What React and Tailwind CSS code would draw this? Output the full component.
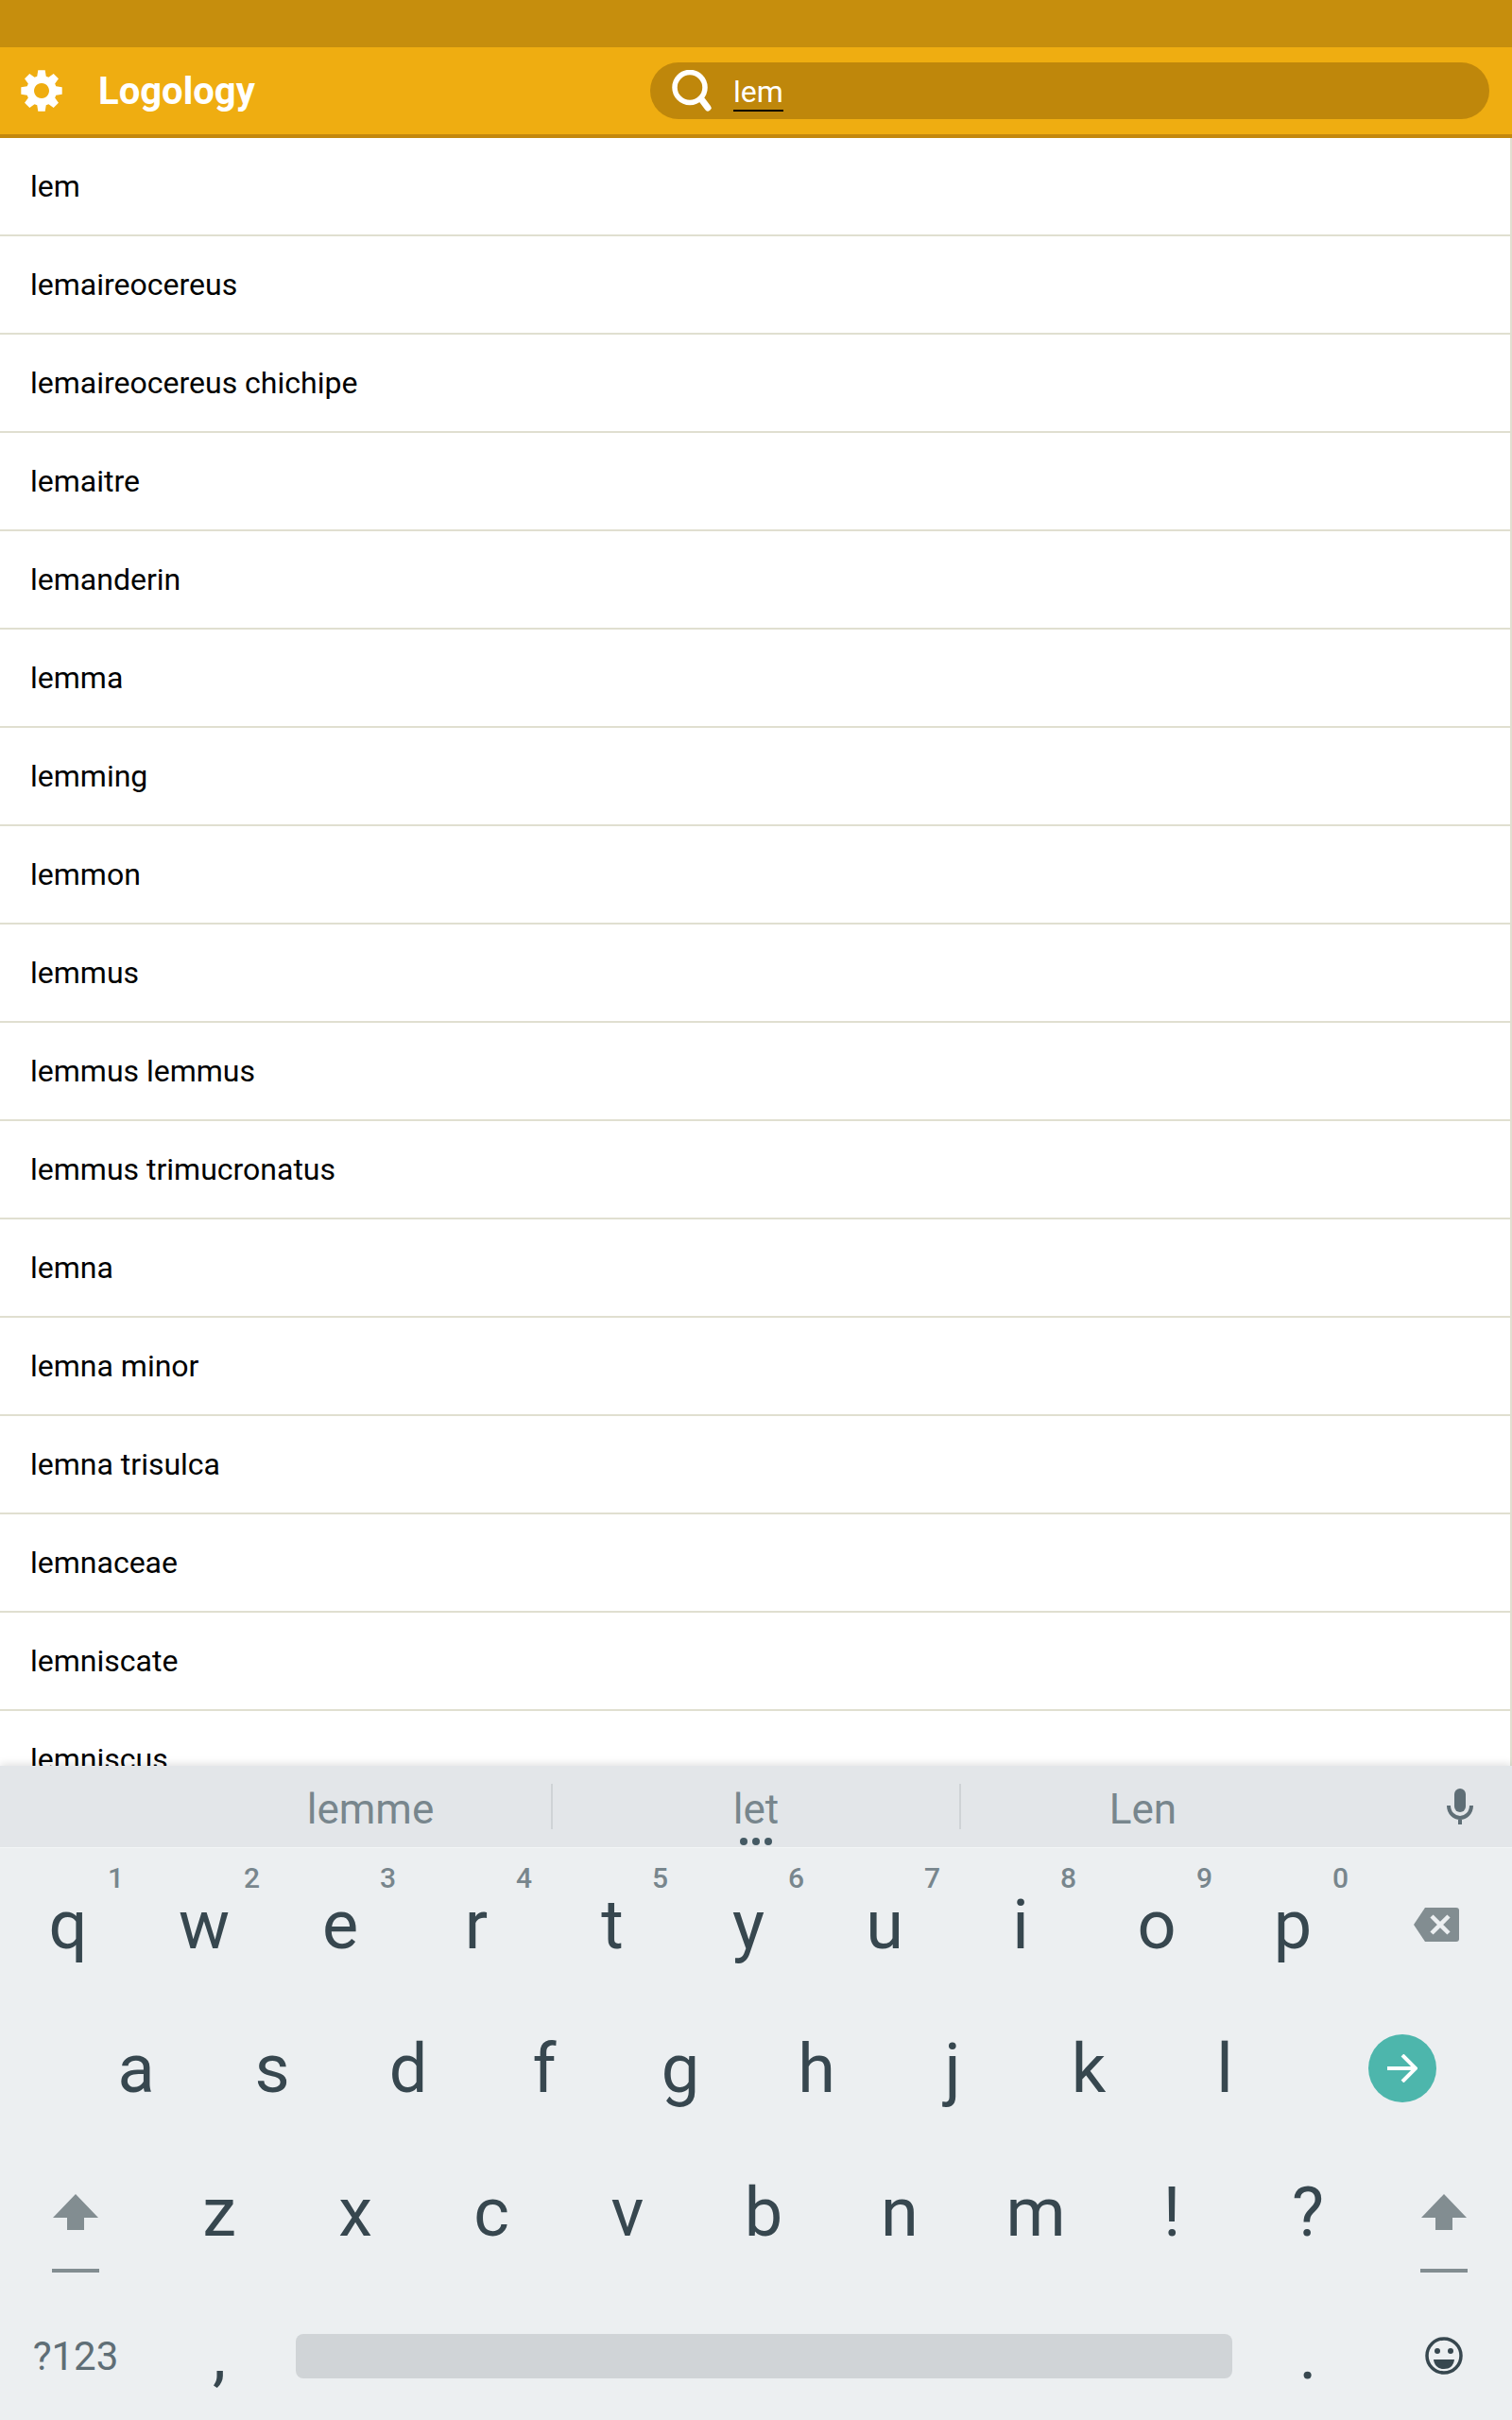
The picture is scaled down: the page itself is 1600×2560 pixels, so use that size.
const words = [
    'lem', 'lemaireocereus', 'lemaireocereus chichipe', 'lemaitre', 'lemanderin', 'lemma', 'lemming', 'lemmon',
    'lemmus', 'lemmus lemmus', 'lemmus trimucronatus', 'lemna', 'lemna minor', 'lemna trisulca', 'lemnaceae',
    'lemniscate', 'lemniscus',
];

// 8 tooth cog, outline plus centre hole
const gearPath = () => {
    const pts = [];
    for (let i = 0; i < 8; i++) {
        const a = (i * Math.PI) / 4 - Math.PI / 2;
        [[16, -0.3], [22, -0.17], [22, 0.17], [16, 0.3]].forEach(([r, d]) => {
            pts.push(`${(22 + r * Math.cos(a + d)).toFixed(2)} ${(22 + r * Math.sin(a + d)).toFixed(2)}`);
        });
    }
    return `M${pts.join(' L')} Z M22 14 a8 8 0 1 0 0.01 0 Z`;
};

const Key = ({ label, num, className = 'w-[144px] pt-3' }) => (
    <div className={`relative flex items-center justify-center text-[72px] font-normal leading-none text-[#37474f] ${className}`}>
        {label}
        {num && <span className="absolute left-[114px] top-[14px] text-[30px] font-medium leading-[36px] text-[#78868d]">{num}</span>}
    </div>
);

const Shift = () => (
    <div className="flex flex-col items-center">
        <svg width="48" height="38" viewBox="0 0 48 38"><path d="M24 0 L48 25 H33 V38 H15 V25 H0 Z" fill="#828d91" /></svg>
        <div className="mt-[41px] h-[4px] w-[50px] bg-[#828d91]" />
    </div>
);

const App = () => {
    return (
        <div className="flex h-screen flex-col overflow-hidden bg-white font-['Roboto',sans-serif]">
            <div className="h-[50px] bg-[#c68e0d]" />

            <div className="flex h-[96px] items-start border-b-4 border-[#c3880d] bg-[#efad11]">
                <div className="flex h-[92px] w-[688px] items-center pl-[22px]">
                    <svg width="44" height="44" viewBox="0 0 44 44"><path d={gearPath()} fill="white" fillRule="evenodd" /></svg>
                    <span className="ml-[38px] mt-px text-[40px] font-bold text-white">Logology</span>
                </div>
                <div className="mt-4 flex h-[60px] w-[888px] items-center rounded-full bg-[#bf870b] pl-[22px]">
                    <svg width="44" height="44" viewBox="0 0 44 44" fill="none" stroke="white">
                        <circle cx="20" cy="18.5" r="16" strokeWidth="5.5" />
                        <path d="M33 32 L39 40" strokeWidth="7" strokeLinecap="round" />
                    </svg>
                    <span className="ml-[22px] mt-1 border-b-2 border-black text-[32px] leading-[38px] text-white">lem</span>
                </div>
            </div>

            <div className="min-h-0 flex-1 overflow-hidden border-r-2 border-[#e0dfd0]">
                {words.map((word) => (
                    <div key={word} className="flex h-[104px] items-center border-b-2 border-[#e0dfd0] pl-8 text-[32px] text-black">
                        {word}
                    </div>
                ))}
            </div>

            <div className="relative h-[692px] bg-[#eceff1] shadow-[0_-2px_8px_rgba(0,0,0,0.12)]">
                <div className="flex h-[86px] items-center bg-[#e3e6e9] pl-[201px] text-[44px] text-[#78868d]">
                    <div className="flex h-[48px] w-[382px] items-center justify-center pt-[6px]">lemme</div>
                    <div className="relative flex h-[48px] w-[434px] items-center justify-center border-x-2 border-[#cfd3d6] pt-[6px]">
                        let
                        <div className="absolute -bottom-[17px] left-1/2 flex -translate-x-1/2 gap-[5px]">
                            <span className="h-2 w-2 rounded-full bg-[#455a64]" />
                            <span className="h-2 w-2 rounded-full bg-[#455a64]" />
                            <span className="h-2 w-2 rounded-full bg-[#455a64]" />
                        </div>
                    </div>
                    <div className="flex h-[48px] w-[385px] items-center justify-center pt-[6px]">Len</div>
                    <div className="ml-auto flex w-[110px] justify-center">
                        <svg width="30" height="40" viewBox="0 0 30 40" fill="none">
                            <rect x="9" y="1" width="12" height="25" rx="6" fill="#5f6e76" />
                            <path d="M3 19 C3 27 9 32 15 32 C21 32 27 27 27 19 M15 32 V39" stroke="#5f6e76" strokeWidth="4" />
                        </svg>
                    </div>
                </div>
                <div className="h-px bg-[#f3f5f6]" />

                <div className="flex h-[152px]">
                    {['q', 'w', 'e', 'r', 't', 'y', 'u', 'i', 'o', 'p'].map((k, i) => (
                        <Key key={k} label={k} num={String((i + 1) % 10)} />
                    ))}
                    <div className="flex flex-1 items-start justify-center pt-[63px]">
                        <svg width="48" height="36" viewBox="0 0 48 36">
                            <path d="M12 0 H45 Q48 0 48 3 V33 Q48 36 45 36 H12 L0 18 Z" fill="#828d91" />
                            <path d="M19 9 L37 27 M37 9 L19 27" stroke="#eceff1" strokeWidth="4.5" />
                        </svg>
                    </div>
                </div>

                <div className="flex h-[152px] pl-[72px]">
                    {['a', 's', 'd', 'f', 'g', 'h', 'j', 'k', 'l'].map((k) => (
                        <Key key={k} label={k} />
                    ))}
                    <div className="flex flex-1 items-center justify-center pt-[10px]">
                        <div className="flex h-[72px] w-[72px] items-center justify-center rounded-full bg-[#4db6ac]">
                            <svg width="32" height="30" viewBox="0 0 32 30" fill="none" stroke="white" strokeWidth="4">
                                <path d="M0 15 H29 M16 1 L30 15 L16 29" />
                            </svg>
                        </div>
                    </div>
                </div>

                <div className="flex h-[152px]">
                    <div className="flex w-[160px] justify-center pt-[62px]"><Shift /></div>
                    {['z', 'x', 'c', 'v', 'b', 'n', 'm', '!', '?'].map((k) => (
                        <Key key={k} label={k} />
                    ))}
                    <div className="flex flex-1 justify-center pt-[62px]"><Shift /></div>
                </div>

                <div className="flex h-[149px] items-center pt-[13px]">
                    <div className="flex w-[160px] items-center justify-center text-[42px] text-[#5f6e76]">?123</div>
                    <Key label="," className="w-[144px]" />
                    <div className="w-[1008px] pl-[9px] pr-2">
                        <div className="h-[47px] rounded-[8px] bg-[#d0d4d7]" />
                    </div>
                    <Key label="." className="w-[144px]" />
                    <div className="flex flex-1 items-center justify-center">
                        <svg width="40" height="40" viewBox="0 0 40 40">
                            <circle cx="20" cy="20" r="18" fill="none" stroke="#37474f" strokeWidth="3.5" />
                            <circle cx="13" cy="15" r="3" fill="#37474f" />
                            <circle cx="27" cy="15" r="3" fill="#37474f" />
                            <path d="M9 24 H31 C30 31 26 34 20 34 C14 34 10 31 9 24 Z" fill="#37474f" />
                        </svg>
                    </div>
                </div>
            </div>
        </div>
    );
};

export default App;
